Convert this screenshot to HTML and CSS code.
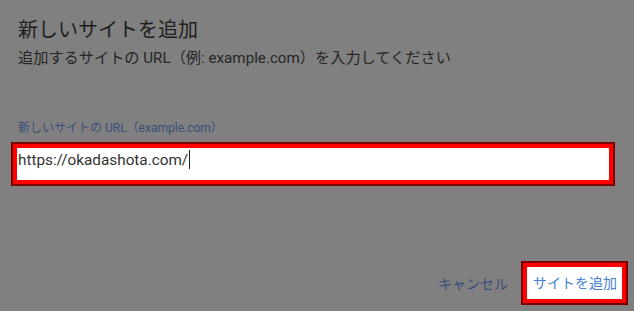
FILE: index.html
```html
<!DOCTYPE html>
<html lang="ja">
<head>
<meta charset="utf-8">
<link rel="stylesheet" href="styles.css">
</head>
<body>
<div class="dialog">
  <h1 class="title">新しいサイトを追加</h1>
  <p class="subtitle">追加するサイトの URL（例: example.com）を入力してください</p>
  <div class="label">新しいサイトの URL（example.com）</div>
  <div class="field-outline">
    <div class="field">https://okadashota.com/<span class="caret"></span></div>
  </div>
  <div class="actions">
    <span class="cancel">キャンセル</span>
    <div class="btn-outline">
      <div class="btn">サイトを追加</div>
    </div>
  </div>
</div>
</body>
</html>
```
FILE: styles.css
```css
html, body {
  margin: 0;
  padding: 0;
  background: #808080;
  width: 634px;
  height: 311px;
  overflow: hidden;
  font-family: Roboto, "Noto Sans CJK JP", sans-serif;
}
.dialog {
  display: flex;
  flex-direction: column;
  padding-top: 18px;
}
.title {
  margin: 0 0 0 18px;
  font-size: 20px;
  line-height: 24px;
  font-weight: 400;
  color: #1e1e1e;
}
.subtitle {
  margin: 6px 0 0 18px;
  font-size: 15.2px;
  line-height: 20px;
  color: #262626;
}
.label {
  margin: 52px 0 0 18px;
  font-size: 12px;
  line-height: 16px;
  color: #3a4f7a;
}
.field-outline {
  margin: 6px 0 0 11px;
  width: 600px;
  border: 2px solid #7a0000;
}
.field {
  box-sizing: border-box;
  height: 40px;
  border: 4px solid #ff0000;
  background: #fff;
  padding: 0 0 0 1px;
  font-size: 15.3px;
  line-height: 24px;
  color: #333;
  display: flex;
  align-items: flex-start;
}
.caret {
  display: inline-block;
  width: 1px;
  height: 19px;
  margin: 2px 0 0 1px;
  background: #222;
}
.actions {
  margin-top: 75px;
  display: flex;
  justify-content: flex-end;
  align-items: center;
  padding-right: 6px;
  gap: 13px;
}
.cancel {
  font-size: 14px;
  line-height: 20px;
  color: #3a4d7a;
  margin-top: 2px;
}
.btn-outline {
  border: 2px solid #7a0000;
}
.btn {
  box-sizing: border-box;
  width: 103px;
  height: 40px;
  border: 4px solid #ff0000;
  background: #fff;
  font-size: 14px;
  line-height: 32px;
  text-align: center;
  color: #4a7fd4;
  padding-left: 1px;
}
```
